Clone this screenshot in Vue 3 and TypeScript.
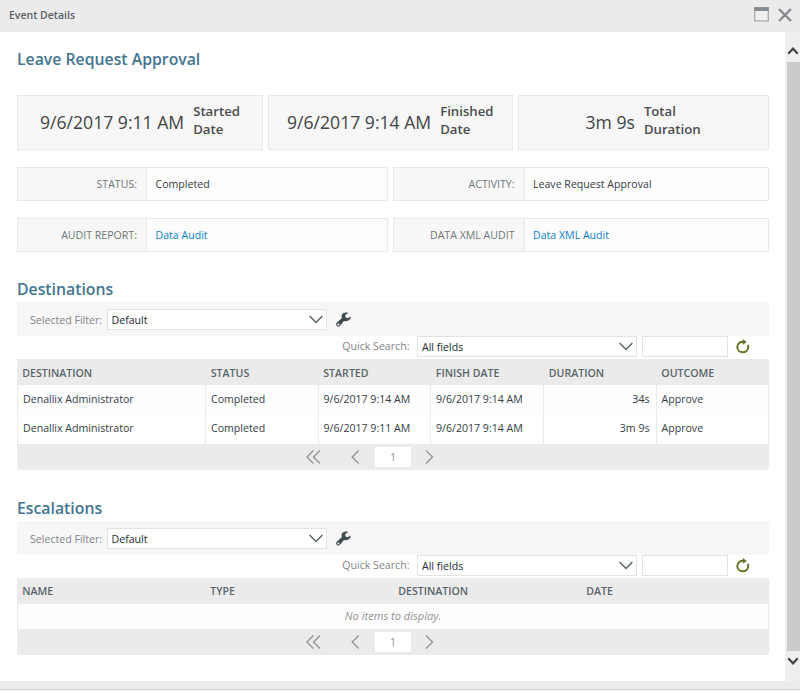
<script setup lang="ts">
interface Card { value: string; label: string; kind: string }
interface Info { label: string; value: string; link: boolean }
interface Grid {
  title: string
  kind: string
  columns: string[]
  rows: string[][]
}

const cards: Card[] = [
  { value: '9/6/2017 9:11 AM', label: 'Started Date', kind: 'started' },
  { value: '9/6/2017 9:14 AM', label: 'Finished Date', kind: 'finished' },
  { value: '3m 9s', label: 'Total Duration', kind: 'duration' },
]

const infos: Info[] = [
  { label: 'STATUS:', value: 'Completed', link: false },
  { label: 'ACTIVITY:', value: 'Leave Request Approval', link: false },
  { label: 'AUDIT REPORT:', value: 'Data Audit', link: true },
  { label: 'DATA XML AUDIT', value: 'Data XML Audit', link: true },
]

const grids: Grid[] = [
  {
    title: 'Destinations',
    kind: 'six',
    columns: ['DESTINATION', 'STATUS', 'STARTED', 'FINISH DATE', 'DURATION', 'OUTCOME'],
    rows: [
      ['Denallix Administrator', 'Completed', '9/6/2017 9:14 AM', '9/6/2017 9:14 AM', '34s', 'Approve'],
      ['Denallix Administrator', 'Completed', '9/6/2017 9:11 AM', '9/6/2017 9:14 AM', '3m 9s', 'Approve'],
    ],
  },
  {
    title: 'Escalations',
    kind: 'four',
    columns: ['NAME', 'TYPE', 'DESTINATION', 'DATE'],
    rows: [],
  },
]
</script>

<template>
  <div class="window">
    <header class="titlebar">
      <span class="caption">Event Details</span>
      <svg class="max" width="15" height="15" viewBox="0 0 15 15">
        <rect x=".75" y=".75" width="13.5" height="13.2" fill="#efefef" stroke="#93979a" />
        <rect x=".25" y=".25" width="14.5" height="3.75" fill="#868b8f" />
      </svg>
      <svg class="close" width="14" height="14" viewBox="0 0 14 14">
        <path d="M1 1 L13 13 M13 1 L1 13" stroke="#85898d" stroke-width="2.4" fill="none" />
      </svg>
    </header>

    <div class="body">
      <main class="content">
        <h1>Leave Request Approval</h1>

        <div class="cards">
          <div v-for="c in cards" :key="c.label" class="card" :class="c.kind">
            <span class="big">{{ c.value }}</span>
            <span class="small">{{ c.label }}</span>
          </div>
        </div>

        <div class="infos">
          <div v-for="i in infos" :key="i.label" class="info">
            <div class="info-label">{{ i.label }}</div>
            <div class="info-value" :class="{ link: i.link }">{{ i.value }}</div>
          </div>
        </div>

        <section v-for="g in grids" :key="g.title" class="section">
          <h2>{{ g.title }}</h2>
          <div class="filter">
            <span class="hint">Selected Filter:</span>
            <div class="select">
              <span>Default</span>
              <svg width="14" height="9" viewBox="0 0 14 9"><path d="M.6 1 L7 7.5 L13.4 1" /></svg>
            </div>
            <svg class="wrench" width="15" height="15" viewBox="0 0 15 15">
              <path d="M12.2 .9 C9.8 -.1 7 .5 6 2.6 C5.4 3.8 5.5 5 5.9 6.1 L1 10.5 C-.2 11.6 -.1 13 .8 13.9 C1.8 14.8 3.2 14.7 4.1 13.6 L8 9 C10 9.7 12.3 9.3 13.7 7.6 C14.5 6.6 14.8 5.5 14.5 4.5 L11.8 6.3 L9.4 5.3 L9.3 3.1 Z" fill="#3f4c50" />
              <circle cx="2.4" cy="12.4" r="1" fill="#f7f7f7" />
            </svg>
          </div>
          <div class="search">
            <span class="hint">Quick Search:</span>
            <div class="select">
              <span>All fields</span>
              <svg width="14" height="9" viewBox="0 0 14 9"><path d="M.6 1 L7 7.5 L13.4 1" /></svg>
            </div>
            <div class="input"></div>
            <svg class="refresh" width="14" height="15" viewBox="0 0 14 15">
              <path d="M7.6 2.9 C4.3 2.3 1.3 4.6 1.3 8 C1.3 11.1 3.8 13.3 6.7 13.3 C9.9 13.3 12.2 10.9 12.2 7.9 C12.2 7.2 12.1 6.6 11.8 6" fill="none" stroke="#667324" stroke-width="2" />
              <path d="M6.8 0 L10.8 3 L6.8 5.8 Z" fill="#667324" />
            </svg>
          </div>
          <div class="table">
            <div class="row head" :class="g.kind">
              <div v-for="col in g.columns" :key="col">{{ col }}</div>
            </div>
            <div v-for="(r, ri) in g.rows" :key="ri" class="row data" :class="g.kind">
              <div v-for="(cell, ci) in r" :key="ci" :class="{ right: ci === 4 }">{{ cell }}</div>
            </div>
            <div v-if="!g.rows.length" class="empty">No items to display.</div>
            <div class="pager">
              <svg class="first" width="15" height="14" viewBox="0 0 15 14"><path d="M7.4 .6 L1 7 L7.4 13.4 M14 .6 L7.6 7 L14 13.4" /></svg>
              <svg class="prev" width="9" height="14" viewBox="0 0 9 14"><path d="M7.7 .6 L1.2 7 L7.7 13.4" /></svg>
              <span class="page">1</span>
              <svg class="next" width="9" height="14" viewBox="0 0 9 14"><path d="M1 .6 L7.5 7 L1 13.4" /></svg>
            </div>
          </div>
        </section>
      </main>

      <aside class="scrollbar">
        <svg class="up" width="12" height="9" viewBox="0 0 12 9"><path d="M1.2 7.7 L6 2.7 L10.8 7.7" /></svg>
        <div class="thumb"></div>
        <svg class="down" width="12" height="9" viewBox="0 0 12 9"><path d="M1.2 1.3 L6 6.3 L10.8 1.3" /></svg>
      </aside>
    </div>
    <footer class="bottom"></footer>
  </div>
</template>

<style>
body { margin: 0; background: #f4f4f4; }
</style>

<style scoped>
.window, .window * { box-sizing: border-box; }
.window {
  width: 800px;
  height: 691px;
  overflow: hidden;
  display: flex;
  flex-direction: column;
  font: 10.6px/14px "Open Sans", sans-serif;
  color: #344044;
}
svg { display: block; flex: none; }
.titlebar {
  height: 32px;
  flex: none;
  display: flex;
  align-items: center;
  background: #ebebeb;
  padding: 0 8px 3px 9px;
  color: #5c6063;
  font-weight: 600;
  font-size: 10.5px;
}
.caption { flex: 1; }
.max { margin-right: 9px; }
.body { height: 649px; flex: none; display: flex; background: #fff; }
.content { width: 785px; padding: 0 16px 0 17px; }
h1, h2 { margin: 0; font-weight: 600; color: #42758f; font-size: 15.8px; line-height: 22px; white-space: nowrap; }
h1 { padding-top: 16px; }
.cards { display: flex; gap: 4.5px; margin-top: 25px; height: 55px; }
.card {
  width: 246px;
  display: flex;
  background: #f7f7f7;
  border: 1px solid #e9e9e9;
  color: #414446;
  padding-left: 22px;
}
.card.finished { width: 245.5px; padding-left: 18.5px; }
.card.duration { width: 251px; padding-left: 67px; }
.big { font-size: 17.6px; line-height: 53px; white-space: nowrap; }
.small { font-size: 13.2px; line-height: 17.5px; font-weight: 600; width: 70px; margin: 7px 0 0 9px; color: #4a4d4f; }
.started .small { width: 55px; }
.infos { display: grid; grid-template-columns: 371px 376px; gap: 17.5px 5px; margin-top: 17px; }
.info { display: flex; height: 33.7px; border: 1px solid #e9e9e9; line-height: 32px; background: #fdfdfd; }
.info-label { width: 129px; background: #f7f7f7; border-right: 1px solid #e9e9e9; text-align: right; padding-right: 9px; color: #6c777c; }
.info:nth-child(even) .info-label { width: 130.5px; }
.info-value { padding-left: 8.5px; }
.link { color: #0a80c8; }
.section { height: 219px; }
.section h2 { padding-top: 26px; height: 50px; }
.filter { height: 34px; background: #f7f7f7; display: flex; align-items: center; padding: 1px 0 0 13px; }
.filter, .search { white-space: nowrap; }
.hint { color: #808588; }
.filter .hint { width: 76.5px; padding-top: 1px; }
.filter .select span { padding-top: 1px; }
.select { width: 220.5px; height: 21px; border: 1px solid #e3e3e3; background: #fff; display: flex; align-items: center; justify-content: space-between; padding: 0 3.5px 0 4px; color: #222c30; }
.select svg path { fill: none; stroke: #596569; stroke-width: 1.5; }
.wrench { margin-left: 8.5px; }
.search { height: 23px; display: flex; align-items: flex-start; padding-left: 325.3px; }
.search .hint { width: 74.7px; line-height: 21px; }
.search .select { padding-top: 1px; padding-right: 3px; }
.search .select svg { margin-top: -1px; }
.input { width: 86px; height: 21px; border: 1px solid #e3e3e3; background: #fff; margin-left: 4.5px; }
.refresh { margin: 3.5px 0 0 8.3px; }
.table { border-radius: 0 0 3px 3px; overflow: hidden; }
.row { display: grid; }
.six { grid-template-columns: 188.5px 112.5px 112.5px 113px 112.5px 113px; }
.four { grid-template-columns: 188px 188px 188px 188px; }
.head { height: 26px; background: #ebebeb; line-height: 28px; font-weight: 600; color: #59656a; }
.head.four { line-height: 27px; }
.head > div { padding-left: 5.3px; }
.data { height: 29.4px; line-height: 28px; background: #fdfdfd; border-left: 1px solid #ebebeb; }
.data + .data { background: #fff; }
.data > div { border-right: 1px solid #ebebeb; padding-left: 5px; white-space: nowrap; }
.data.six { grid-template-columns: 188px 112.5px 112.5px 113px 112.5px 112.5px; }
.data > .right { text-align: right; padding-right: 6px; }
.empty { height: 25px; line-height: 24px; font-size: 11.1px; border: solid #ebebeb; border-width: 0 1px; text-align: center; background: #fdfdfd; font-style: italic; color: #929292; }
.pager { height: 26.4px; background: #ebebeb; display: flex; align-items: center; padding: .4px 0 0 289px; }
.pager path { fill: none; stroke: #92969a; stroke-width: 1.4; }
.prev { margin-left: 30.4px; }
.page { width: 36px; height: 20px; margin: 0 14.3px 0 14.6px; background: #fff; color: #8b8f91; text-align: center; line-height: 20px; }
.scrollbar { width: 15px; background: #efefef; display: flex; flex-direction: column; align-items: center; padding-left: 1px; }
.scrollbar path { fill: none; stroke: #43474b; stroke-width: 2.2; }
.up { margin-top: 14px; }
.thumb { width: 13px; height: 589px; flex: none; background: #cbcbcb; margin-top: 7px; margin-bottom: 6px; }
.bottom { height: 9px; flex: none; background: #ebebeb; border-bottom: 1px solid #d7d7d7; }
</style>
